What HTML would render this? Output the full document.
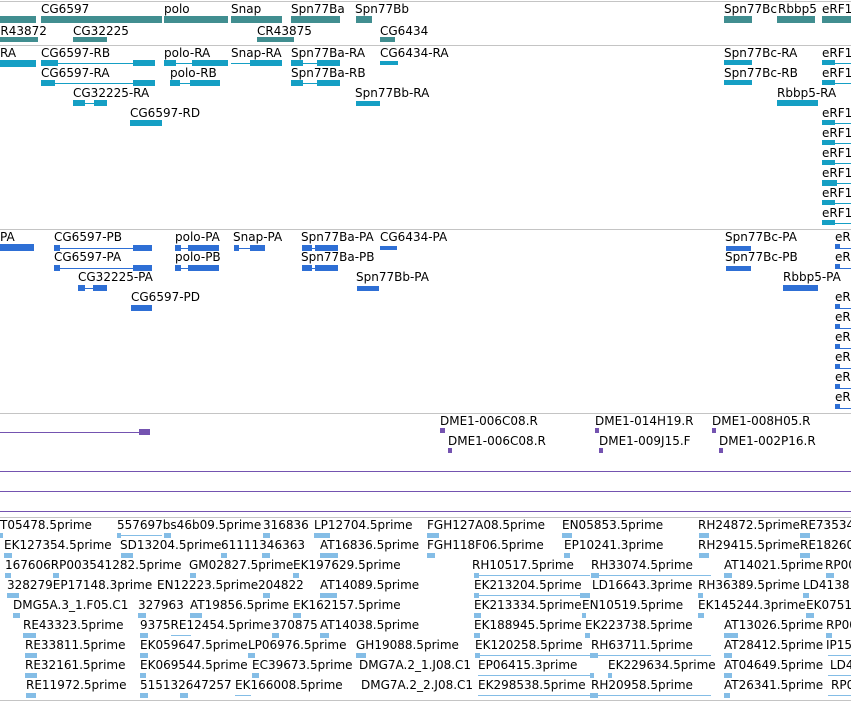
<!DOCTYPE html>
<html><head><meta charset="utf-8"><style>
*{margin:0;padding:0}
body{width:851px;height:701px;background:#fff;position:relative;overflow:hidden;font-family:"DejaVu Sans","Liberation Sans",sans-serif;font-size:12px;line-height:12px;color:#000}
span{position:absolute;white-space:nowrap}
i{position:absolute;display:block}
.h{height:1px;background:#c4c4c4;left:0;width:851px}
.a{background:#418e90;height:7px}
.b{background:#159fc4}
.c{background:#2e6fd5}
.p{background:#7453b0}
.e{background:#84bde6}
</style></head><body>
<i class="h" style="top:1px"></i>
<i class="h" style="top:45px"></i>
<i class="h" style="top:229px"></i>
<i class="h" style="top:413px"></i>
<i class="h" style="top:517px"></i>
<i class="h" style="top:700px"></i>

<!-- track 1 -->
<span style="left:41px;top:3px">CG6597</span>
<span style="left:164px;top:3px">polo</span>
<span style="left:231px;top:3px">Snap</span>
<span style="left:291px;top:3px">Spn77Ba</span>
<span style="left:355px;top:3px">Spn77Bb</span>
<span style="left:724px;top:3px">Spn77Bc</span>
<span style="left:778px;top:3px">Rbbp5</span>
<span style="left:822px;top:3px">eRF1</span>
<i class="a" style="left:0;top:16px;width:36px"></i>
<i class="a" style="left:41px;top:16px;width:121px"></i>
<i class="a" style="left:164px;top:16px;width:64px"></i>
<i class="a" style="left:231px;top:16px;width:51px"></i>
<i class="a" style="left:291px;top:16px;width:49px"></i>
<i class="a" style="left:356px;top:16px;width:16px"></i>
<i class="a" style="left:724px;top:16px;width:28px"></i>
<i class="a" style="left:777px;top:16px;width:38px"></i>
<i class="a" style="left:822px;top:16px;width:29px"></i>
<span style="left:-8px;top:25px">CR43872</span>
<span style="left:73px;top:25px">CG32225</span>
<span style="left:257px;top:25px">CR43875</span>
<span style="left:380px;top:25px">CG6434</span>
<i class="a" style="left:0;top:37px;width:38px;height:5px"></i>
<i class="a" style="left:73px;top:37px;width:34px;height:5px"></i>
<i class="a" style="left:257px;top:37px;width:37px;height:5px"></i>
<i class="a" style="left:380px;top:37px;width:15px;height:5px"></i>

<!-- track 2 -->
<span style="left:0;top:47px">RA</span>
<span style="left:41px;top:47px">CG6597-RB</span>
<span style="left:164px;top:47px">polo-RA</span>
<span style="left:231px;top:47px">Snap-RA</span>
<span style="left:291px;top:47px">Spn77Ba-RA</span>
<span style="left:380px;top:47px">CG6434-RA</span>
<span style="left:724px;top:47px">Spn77Bc-RA</span>
<span style="left:41px;top:67px">CG6597-RA</span>
<span style="left:170px;top:67px">polo-RB</span>
<span style="left:291px;top:67px">Spn77Ba-RB</span>
<span style="left:724px;top:67px">Spn77Bc-RB</span>
<span style="left:73px;top:87px">CG32225-RA</span>
<span style="left:355px;top:87px">Spn77Bb-RA</span>
<span style="left:777px;top:87px">Rbbp5-RA</span>
<span style="left:130px;top:107px">CG6597-RD</span>
<span style="left:822px;top:47px">eRF1</span><span style="left:822px;top:67px">eRF1</span>
<span style="left:822px;top:107px">eRF1</span><span style="left:822px;top:127px">eRF1</span>
<span style="left:822px;top:147px">eRF1</span><span style="left:822px;top:167px">eRF1</span>
<span style="left:822px;top:187px">eRF1</span><span style="left:822px;top:207px">eRF1</span>
<i class="b" style="left:0;top:60px;width:36px;height:7px"></i>
<i class="b" style="left:41px;top:63px;width:114px;height:1px"></i>
<i class="b" style="left:41px;top:60px;width:17px;height:6px"></i>
<i class="b" style="left:133px;top:60px;width:22px;height:6px"></i>
<i class="b" style="left:164px;top:63px;width:64px;height:1px"></i>
<i class="b" style="left:164px;top:60px;width:12px;height:6px"></i>
<i class="b" style="left:192px;top:60px;width:36px;height:6px"></i>
<i class="b" style="left:231px;top:63px;width:51px;height:1px"></i>
<i class="b" style="left:250px;top:60px;width:32px;height:6px"></i>
<i class="b" style="left:291px;top:63px;width:49px;height:1px"></i>
<i class="b" style="left:291px;top:60px;width:12px;height:6px"></i>
<i class="b" style="left:317px;top:60px;width:23px;height:6px"></i>
<i class="b" style="left:380px;top:61px;width:18px;height:4px"></i>
<i class="b" style="left:724px;top:60px;width:28px;height:5px"></i>
<i class="b" style="left:41px;top:83px;width:114px;height:1px"></i>
<i class="b" style="left:41px;top:80px;width:14px;height:6px"></i>
<i class="b" style="left:133px;top:80px;width:22px;height:6px"></i>
<i class="b" style="left:170px;top:83px;width:50px;height:1px"></i>
<i class="b" style="left:170px;top:80px;width:10px;height:6px"></i>
<i class="b" style="left:190px;top:80px;width:30px;height:6px"></i>
<i class="b" style="left:291px;top:83px;width:49px;height:1px"></i>
<i class="b" style="left:291px;top:80px;width:12px;height:6px"></i>
<i class="b" style="left:317px;top:80px;width:23px;height:6px"></i>
<i class="b" style="left:724px;top:80px;width:28px;height:5px"></i>
<i class="b" style="left:73px;top:103px;width:34px;height:1px"></i>
<i class="b" style="left:73px;top:100px;width:12px;height:6px"></i>
<i class="b" style="left:94px;top:100px;width:13px;height:6px"></i>
<i class="b" style="left:356px;top:101px;width:24px;height:5px"></i>
<i class="b" style="left:777px;top:100px;width:41px;height:6px"></i>
<i class="b" style="left:130px;top:120px;width:32px;height:6px"></i>
<i class="b" style="left:822px;top:60px;width:13px;height:5px"></i><i class="b" style="left:822px;top:63px;width:29px;height:1px"></i>
<i class="b" style="left:822px;top:80px;width:13px;height:5px"></i><i class="b" style="left:822px;top:83px;width:29px;height:1px"></i>
<i class="b" style="left:822px;top:120px;width:13px;height:5px"></i><i class="b" style="left:822px;top:123px;width:29px;height:1px"></i>
<i class="b" style="left:822px;top:140px;width:13px;height:5px"></i><i class="b" style="left:822px;top:143px;width:29px;height:1px"></i>
<i class="b" style="left:822px;top:160px;width:13px;height:5px"></i><i class="b" style="left:822px;top:163px;width:29px;height:1px"></i>
<i class="b" style="left:822px;top:180px;width:15px;height:6px"></i><i class="b" style="left:822px;top:183px;width:29px;height:1px"></i>
<i class="b" style="left:822px;top:200px;width:13px;height:5px"></i><i class="b" style="left:822px;top:203px;width:29px;height:1px"></i>
<i class="b" style="left:822px;top:220px;width:13px;height:5px"></i><i class="b" style="left:822px;top:223px;width:29px;height:1px"></i>

<!-- track 3 -->
<span style="left:0;top:231px">PA</span>
<span style="left:54px;top:231px">CG6597-PB</span>
<span style="left:175px;top:231px">polo-PA</span>
<span style="left:233px;top:231px">Snap-PA</span>
<span style="left:301px;top:231px">Spn77Ba-PA</span>
<span style="left:380px;top:231px">CG6434-PA</span>
<span style="left:725px;top:231px">Spn77Bc-PA</span>
<span style="left:54px;top:251px">CG6597-PA</span>
<span style="left:175px;top:251px">polo-PB</span>
<span style="left:301px;top:251px">Spn77Ba-PB</span>
<span style="left:725px;top:251px">Spn77Bc-PB</span>
<span style="left:78px;top:271px">CG32225-PA</span>
<span style="left:356px;top:271px">Spn77Bb-PA</span>
<span style="left:783px;top:271px">Rbbp5-PA</span>
<span style="left:131px;top:291px">CG6597-PD</span>
<span style="left:835px;top:231px">eR</span><span style="left:835px;top:251px">eR</span>
<span style="left:835px;top:291px">eR</span><span style="left:835px;top:311px">eR</span>
<span style="left:835px;top:331px">eR</span><span style="left:835px;top:351px">eR</span>
<span style="left:835px;top:371px">eR</span><span style="left:835px;top:391px">eR</span>
<i class="c" style="left:0;top:244px;width:34px;height:7px"></i>
<i class="c" style="left:54px;top:248px;width:98px;height:1px"></i>
<i class="c" style="left:54px;top:245px;width:6px;height:6px"></i>
<i class="c" style="left:133px;top:245px;width:19px;height:6px"></i>
<i class="c" style="left:175px;top:248px;width:44px;height:1px"></i>
<i class="c" style="left:175px;top:245px;width:6px;height:6px"></i>
<i class="c" style="left:188px;top:245px;width:31px;height:6px"></i>
<i class="c" style="left:234px;top:248px;width:31px;height:1px"></i>
<i class="c" style="left:234px;top:245px;width:5px;height:6px"></i>
<i class="c" style="left:250px;top:245px;width:15px;height:6px"></i>
<i class="c" style="left:302px;top:248px;width:36px;height:1px"></i>
<i class="c" style="left:302px;top:245px;width:10px;height:6px"></i>
<i class="c" style="left:315px;top:245px;width:23px;height:6px"></i>
<i class="c" style="left:380px;top:246px;width:17px;height:4px"></i>
<i class="c" style="left:726px;top:246px;width:25px;height:5px"></i>
<i class="c" style="left:54px;top:268px;width:98px;height:1px"></i>
<i class="c" style="left:54px;top:265px;width:6px;height:6px"></i>
<i class="c" style="left:133px;top:265px;width:19px;height:6px"></i>
<i class="c" style="left:175px;top:268px;width:44px;height:1px"></i>
<i class="c" style="left:175px;top:265px;width:6px;height:6px"></i>
<i class="c" style="left:188px;top:265px;width:31px;height:6px"></i>
<i class="c" style="left:302px;top:268px;width:36px;height:1px"></i>
<i class="c" style="left:302px;top:265px;width:10px;height:6px"></i>
<i class="c" style="left:315px;top:265px;width:23px;height:6px"></i>
<i class="c" style="left:726px;top:266px;width:25px;height:5px"></i>
<i class="c" style="left:78px;top:288px;width:29px;height:1px"></i>
<i class="c" style="left:78px;top:285px;width:7px;height:6px"></i>
<i class="c" style="left:93px;top:285px;width:14px;height:6px"></i>
<i class="c" style="left:357px;top:286px;width:22px;height:5px"></i>
<i class="c" style="left:783px;top:285px;width:35px;height:6px"></i>
<i class="c" style="left:131px;top:305px;width:21px;height:6px"></i>
<i class="c" style="left:835px;top:244px;width:5px;height:5px"></i><i class="c" style="left:835px;top:248px;width:16px;height:1px"></i>
<i class="c" style="left:835px;top:264px;width:5px;height:5px"></i><i class="c" style="left:835px;top:268px;width:16px;height:1px"></i>
<i class="c" style="left:835px;top:304px;width:5px;height:5px"></i><i class="c" style="left:835px;top:308px;width:16px;height:1px"></i>
<i class="c" style="left:835px;top:324px;width:5px;height:5px"></i><i class="c" style="left:835px;top:328px;width:16px;height:1px"></i>
<i class="c" style="left:835px;top:344px;width:5px;height:5px"></i><i class="c" style="left:835px;top:348px;width:16px;height:1px"></i>
<i class="c" style="left:835px;top:364px;width:5px;height:5px"></i><i class="c" style="left:835px;top:368px;width:16px;height:1px"></i>
<i class="c" style="left:835px;top:384px;width:5px;height:5px"></i><i class="c" style="left:835px;top:388px;width:16px;height:1px"></i>
<i class="c" style="left:835px;top:404px;width:5px;height:5px"></i><i class="c" style="left:835px;top:408px;width:16px;height:1px"></i>

<!-- track 4 -->
<span style="left:440px;top:415px">DME1-006C08.R</span>
<span style="left:595px;top:415px">DME1-014H19.R</span>
<span style="left:712px;top:415px">DME1-008H05.R</span>
<span style="left:448px;top:435px">DME1-006C08.R</span>
<span style="left:599px;top:435px">DME1-009J15.F</span>
<span style="left:719px;top:435px">DME1-002P16.R</span>
<i class="p" style="left:440px;top:428px;width:5px;height:5px"></i>
<i class="p" style="left:595px;top:428px;width:4px;height:5px"></i>
<i class="p" style="left:712px;top:428px;width:4px;height:5px"></i>
<i class="p" style="left:448px;top:448px;width:4px;height:5px"></i>
<i class="p" style="left:599px;top:448px;width:4px;height:5px"></i>
<i class="p" style="left:719px;top:448px;width:4px;height:5px"></i>
<i class="p" style="left:0;top:432px;width:140px;height:1px"></i>
<i class="p" style="left:139px;top:429px;width:11px;height:6px"></i>
<i class="p" style="left:0;top:471px;width:851px;height:1px"></i>
<i class="p" style="left:0;top:491px;width:851px;height:1px"></i>
<i class="p" style="left:0;top:511px;width:851px;height:1px"></i>

<!-- ESTs -->
<span style="left:0;top:519px">T05478.5prime</span><span style="left:117px;top:519px">557697bs46b09.5prime</span><span style="left:263px;top:519px">316836</span><span style="left:314px;top:519px">LP12704.5prime</span><span style="left:427px;top:519px">FGH127A08.5prime</span><span style="left:562px;top:519px">EN05853.5prime</span><span style="left:698px;top:519px">RH24872.5prime</span><span style="left:800px;top:519px">RE73534</span>
<span style="left:4px;top:539px">EK127354.5prime</span><span style="left:120px;top:539px">SD13204.5prime</span><span style="left:221px;top:539px">61111346363</span><span style="left:320px;top:539px">AT16836.5prime</span><span style="left:427px;top:539px">FGH118F06.5prime</span><span style="left:564px;top:539px">EP10241.3prime</span><span style="left:698px;top:539px">RH29415.5prime</span><span style="left:800px;top:539px">RE18260</span>
<span style="left:5px;top:559px">167606RP003541282.5prime</span><span style="left:189px;top:559px">GM02827.5prime</span><span style="left:293px;top:559px">EK197629.5prime</span><span style="left:472px;top:559px">RH10517.5prime</span><span style="left:591px;top:559px">RH33074.5prime</span><span style="left:724px;top:559px">AT14021.5prime</span><span style="left:825px;top:559px">RP00</span>
<span style="left:7px;top:579px">328279EP17148.3prime</span><span style="left:157px;top:579px">EN12223.5prime</span><span style="left:258px;top:579px">204822</span><span style="left:320px;top:579px">AT14089.5prime</span><span style="left:474px;top:579px">EK213204.5prime</span><span style="left:592px;top:579px">LD16643.3prime</span><span style="left:698px;top:579px">RH36389.5prime</span><span style="left:803px;top:579px">LD4138</span>
<span style="left:13px;top:599px">DMG5A.3_1.F05.C1</span><span style="left:138px;top:599px">327963</span><span style="left:190px;top:599px">AT19856.5prime</span><span style="left:293px;top:599px">EK162157.5prime</span><span style="left:474px;top:599px">EK213334.5prime</span><span style="left:582px;top:599px">EN10519.5prime</span><span style="left:698px;top:599px">EK145244.3prime</span><span style="left:806px;top:599px">EK0751</span>
<span style="left:23px;top:619px">RE43323.5prime</span><span style="left:140px;top:619px">9375RE12454.5prime</span><span style="left:272px;top:619px">370875</span><span style="left:320px;top:619px">AT14038.5prime</span><span style="left:474px;top:619px">EK188945.5prime</span><span style="left:585px;top:619px">EK223738.5prime</span><span style="left:724px;top:619px">AT13026.5prime</span><span style="left:826px;top:619px">RP00</span>
<span style="left:25px;top:639px">RE33811.5prime</span><span style="left:140px;top:639px">EK059647.5prime</span><span style="left:248px;top:639px">LP06976.5prime</span><span style="left:356px;top:639px">GH19088.5prime</span><span style="left:475px;top:639px">EK120258.5prime</span><span style="left:591px;top:639px">RH63711.5prime</span><span style="left:724px;top:639px">AT28412.5prime</span><span style="left:826px;top:639px">IP15</span>
<span style="left:25px;top:659px">RE32161.5prime</span><span style="left:140px;top:659px">EK069544.5prime</span><span style="left:252px;top:659px">EC39673.5prime</span><span style="left:359px;top:659px">DMG7A.2_1.J08.C1</span><span style="left:478px;top:659px">EP06415.3prime</span><span style="left:608px;top:659px">EK229634.5prime</span><span style="left:724px;top:659px">AT04649.5prime</span><span style="left:830px;top:659px">LD4</span>
<span style="left:26px;top:679px">RE11972.5prime</span><span style="left:140px;top:679px">515132647257</span><span style="left:235px;top:679px">EK166008.5prime</span><span style="left:361px;top:679px">DMG7A.2_2.J08.C1</span><span style="left:478px;top:679px">EK298538.5prime</span><span style="left:591px;top:679px">RH20958.5prime</span><span style="left:724px;top:679px">AT26341.5prime</span><span style="left:831px;top:679px">RP0</span>
<!-- EST glyphs -->
<i class="e" style="left:0;top:533px;width:3px;height:5px"></i><i class="e" style="left:117px;top:533px;width:4px;height:5px"></i><i class="e" style="left:117px;top:535px;width:45px;height:1px"></i><i class="e" style="left:164px;top:533px;width:7px;height:5px"></i><i class="e" style="left:263px;top:533px;width:7px;height:5px"></i><i class="e" style="left:314px;top:533px;width:16px;height:5px"></i><i class="e" style="left:427px;top:533px;width:12px;height:5px"></i><i class="e" style="left:562px;top:533px;width:10px;height:5px"></i><i class="e" style="left:699px;top:533px;width:10px;height:5px"></i><i class="e" style="left:800px;top:533px;width:10px;height:5px"></i>
<i class="e" style="left:4px;top:553px;width:8px;height:5px"></i><i class="e" style="left:121px;top:553px;width:12px;height:5px"></i><i class="e" style="left:221px;top:553px;width:6px;height:5px"></i><i class="e" style="left:262px;top:553px;width:8px;height:5px"></i><i class="e" style="left:320px;top:553px;width:18px;height:5px"></i><i class="e" style="left:427px;top:553px;width:8px;height:5px"></i><i class="e" style="left:564px;top:553px;width:6px;height:5px"></i><i class="e" style="left:699px;top:553px;width:10px;height:5px"></i><i class="e" style="left:800px;top:553px;width:10px;height:5px"></i>
<i class="e" style="left:5px;top:573px;width:6px;height:5px"></i><i class="e" style="left:53px;top:573px;width:6px;height:5px"></i><i class="e" style="left:190px;top:573px;width:6px;height:5px"></i><i class="e" style="left:293px;top:573px;width:6px;height:5px"></i><i class="e" style="left:474px;top:575px;width:116px;height:1px"></i><i class="e" style="left:474px;top:573px;width:5px;height:5px"></i><i class="e" style="left:591px;top:575px;width:120px;height:1px"></i><i class="e" style="left:591px;top:573px;width:8px;height:5px"></i><i class="e" style="left:724px;top:573px;width:8px;height:5px"></i><i class="e" style="left:826px;top:573px;width:8px;height:5px"></i>
<i class="e" style="left:7px;top:593px;width:12px;height:5px"></i><i class="e" style="left:263px;top:593px;width:7px;height:5px"></i><i class="e" style="left:320px;top:593px;width:17px;height:5px"></i><i class="e" style="left:474px;top:595px;width:116px;height:1px"></i><i class="e" style="left:474px;top:593px;width:5px;height:5px"></i><i class="e" style="left:580px;top:593px;width:10px;height:5px"></i><i class="e" style="left:698px;top:593px;width:5px;height:5px"></i><i class="e" style="left:803px;top:593px;width:6px;height:5px"></i>
<i class="e" style="left:13px;top:613px;width:7px;height:5px"></i><i class="e" style="left:138px;top:613px;width:8px;height:5px"></i><i class="e" style="left:190px;top:613px;width:12px;height:5px"></i><i class="e" style="left:293px;top:613px;width:8px;height:5px"></i><i class="e" style="left:474px;top:613px;width:7px;height:5px"></i><i class="e" style="left:582px;top:613px;width:4px;height:5px"></i><i class="e" style="left:698px;top:613px;width:6px;height:5px"></i><i class="e" style="left:806px;top:613px;width:8px;height:5px"></i>
<i class="e" style="left:23px;top:633px;width:13px;height:5px"></i><i class="e" style="left:140px;top:633px;width:8px;height:5px"></i><i class="e" style="left:171px;top:635px;width:20px;height:1px"></i><i class="e" style="left:272px;top:633px;width:7px;height:5px"></i><i class="e" style="left:320px;top:633px;width:9px;height:5px"></i><i class="e" style="left:474px;top:633px;width:6px;height:5px"></i><i class="e" style="left:585px;top:633px;width:5px;height:5px"></i><i class="e" style="left:724px;top:633px;width:14px;height:5px"></i><i class="e" style="left:826px;top:633px;width:6px;height:5px"></i>
<i class="e" style="left:25px;top:653px;width:12px;height:5px"></i><i class="e" style="left:140px;top:653px;width:8px;height:5px"></i><i class="e" style="left:248px;top:653px;width:7px;height:5px"></i><i class="e" style="left:356px;top:653px;width:10px;height:5px"></i><i class="e" style="left:475px;top:655px;width:116px;height:1px"></i><i class="e" style="left:475px;top:653px;width:5px;height:5px"></i><i class="e" style="left:590px;top:653px;width:8px;height:5px"></i><i class="e" style="left:591px;top:655px;width:120px;height:1px"></i><i class="e" style="left:724px;top:653px;width:8px;height:5px"></i><i class="e" style="left:828px;top:655px;width:23px;height:1px"></i>
<i class="e" style="left:25px;top:673px;width:12px;height:5px"></i><i class="e" style="left:140px;top:673px;width:6px;height:5px"></i><i class="e" style="left:252px;top:673px;width:7px;height:5px"></i><i class="e" style="left:478px;top:675px;width:116px;height:1px"></i><i class="e" style="left:590px;top:673px;width:4px;height:5px"></i><i class="e" style="left:608px;top:673px;width:4px;height:5px"></i><i class="e" style="left:724px;top:673px;width:8px;height:5px"></i><i class="e" style="left:828px;top:675px;width:23px;height:1px"></i>
<i class="e" style="left:26px;top:693px;width:10px;height:5px"></i><i class="e" style="left:140px;top:693px;width:8px;height:5px"></i><i class="e" style="left:180px;top:693px;width:8px;height:5px"></i><i class="e" style="left:235px;top:695px;width:16px;height:1px"></i><i class="e" style="left:478px;top:695px;width:116px;height:1px"></i><i class="e" style="left:590px;top:693px;width:8px;height:5px"></i><i class="e" style="left:591px;top:695px;width:120px;height:1px"></i><i class="e" style="left:724px;top:693px;width:6px;height:5px"></i><i class="e" style="left:828px;top:695px;width:23px;height:1px"></i>
</body></html>
